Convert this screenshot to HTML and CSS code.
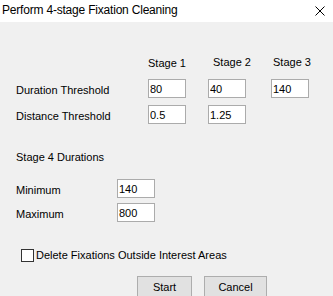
FILE: index.html
```html
<!DOCTYPE html>
<html>
<head>
<meta charset="utf-8">
<link rel="stylesheet" href="styles.css">
</head>
<body>
<div class="window">
  <div class="titlebar">
    <span class="title">Perform 4-stage Fixation Cleaning</span>
    <svg class="close" width="10" height="10" viewBox="0 0 10 10"><path d="M0.5 0.5 L9.5 9.5 M9.5 0.5 L0.5 9.5" stroke="#000" stroke-width="1" fill="none"/></svg>
  </div>
  <div class="content">
    <div class="stages">
      <div></div>
      <div class="head head-1">Stage 1</div>
      <div class="head head-2">Stage 2</div>
      <div class="head head-3">Stage 3</div>

      <div class="label">Duration Threshold</div>
      <div><input class="field" value="80"></div>
      <div><input class="field" value="40"></div>
      <div><input class="field" value="140"></div>

      <div class="label">Distance Threshold</div>
      <div><input class="field" value="0.5"></div>
      <div><input class="field" value="1.25"></div>
      <div></div>
    </div>

    <div class="section-title">Stage 4 Durations</div>
    <div class="durations">
      <div class="label">Minimum</div>
      <div><input class="field" value="140"></div>
      <div class="label">Maximum</div>
      <div><input class="field" value="800"></div>
    </div>

    <div class="check">
      <span class="box"></span>
      <span class="check-label">Delete Fixations Outside Interest Areas</span>
    </div>

    <div class="buttons">
      <button class="btn btn-start">Start</button>
      <button class="btn btn-cancel">Cancel</button>
    </div>
  </div>
</div>
</body>
</html>
```

FILE: styles.css
```css
html, body {
  margin: 0;
  padding: 0;
}
body {
  width: 333px;
  height: 296px;
  overflow: hidden;
  background: #f0f0f0;
  font-family: "Liberation Sans", Arial, sans-serif;
  font-size: 11px;
  color: #000;
}
.window {
  width: 333px;
  height: 296px;
}
.titlebar {
  height: 22px;
  background: #fff;
  display: flex;
  align-items: flex-start;
}
.title {
  font-size: 12px;
  line-height: 20px;
  padding-left: 2px;
  letter-spacing: -0.2px;
}
.close {
  margin-left: auto;
  margin-right: 8px;
  margin-top: 6px;
  display: block;
}
.content {
  padding-left: 16px;
}
.stages {
  margin-top: 34px;
  display: grid;
  grid-template-columns: 132px 60px 63px 60px;
  row-gap: 7px;
}
.head {
  line-height: 13px;
  margin-bottom: 2px;
  white-space: nowrap;
}
.head-1 { padding-top: 1px; }
.head-2 { padding-left: 5px; }
.head-3 { padding-left: 2px; }
.label {
  line-height: 13px;
  padding-top: 5px;
  white-space: nowrap;
}
.field {
  display: block;
  box-sizing: border-box;
  width: 38px;
  height: 19px;
  margin: 0;
  padding: 0 0 0 1px;
  border: 1px solid #ababab;
  background: #fff;
  font-family: "Liberation Sans", Arial, sans-serif;
  font-size: 11px;
  color: #000;
  outline: none;
}
.section-title {
  margin-top: 27px;
  line-height: 13px;
}
.durations {
  margin-top: 15px;
  display: grid;
  grid-template-columns: 101px 38px;
  row-gap: 5px;
}
.check {
  margin-top: 27px;
  display: flex;
  align-items: flex-start;
}
.box {
  display: block;
  box-sizing: border-box;
  width: 13px;
  height: 13px;
  margin-left: 5px;
  border: 1px solid #333;
  background: #fff;
}
.check-label {
  margin-left: 2px;
  line-height: 13px;
  white-space: nowrap;
}
.buttons {
  margin-top: 14px;
  margin-left: 121px;
  display: flex;
  gap: 12px;
}
.btn {
  display: block;
  box-sizing: border-box;
  height: 23px;
  padding: 0;
  margin: 0;
  border: 1px solid #adadad;
  background: #e1e1e1;
  font-family: "Liberation Sans", Arial, sans-serif;
  font-size: 11px;
  line-height: 19px;
  color: #000;
  text-align: center;
}
.btn-start { width: 55px; }
.btn-cancel { width: 63px; }
```
